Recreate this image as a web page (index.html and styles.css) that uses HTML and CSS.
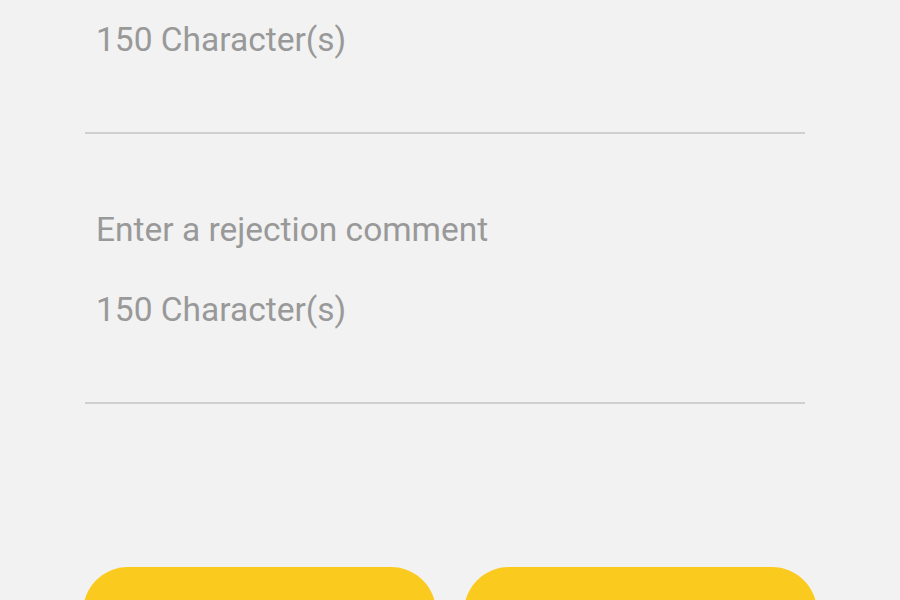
FILE: index.html
```html
<!DOCTYPE html>
<html lang="en">
<head>
<meta charset="utf-8">
<title>Rejection comment</title>
<link rel="stylesheet" href="styles.css">
</head>
<body>
<main class="screen">
  <form class="form">
    <div class="field field-first">
      <div class="field-counter">150 Character(s)</div>
    </div>
    <div class="field">
      <div class="field-label">Enter a rejection comment</div>
      <div class="field-counter">150 Character(s)</div>
    </div>
  </form>
  <div class="actions">
    <button class="btn" type="button" aria-label="Approve"></button>
    <button class="btn" type="button" aria-label="Reject"></button>
  </div>
</main>
</body>
</html>
```
FILE: styles.css
```css
* { box-sizing: border-box; }
html, body {
  margin: 0;
  padding: 0;
  background: #f2f2f2;
  height: 600px;
  overflow: hidden;
}
body {
  font-family: Roboto, "Noto Sans", sans-serif;
}
.screen {
  display: flex;
  flex-direction: column;
}
.form {
  width: 720px;
  margin-left: 85px;
  display: flex;
  flex-direction: column;
}
.field {
  padding: 76px 0 72px 11px;
  border-bottom: 2px solid #d0d0d0;
  display: flex;
  flex-direction: column;
  gap: 40px;
}
.field-first {
  padding-top: 20px;
}
.field-label,
.field-counter {
  font-size: 33.5px;
  line-height: 40px;
  color: #999999;
  white-space: nowrap;
}
.actions {
  margin-top: 163px;
  margin-left: 83px;
  width: 734px;
  display: flex;
  gap: 28px;
}
.btn {
  flex: 1;
  height: 110px;
  border: none;
  border-radius: 45px;
  background: #fbca1f;
}
```
